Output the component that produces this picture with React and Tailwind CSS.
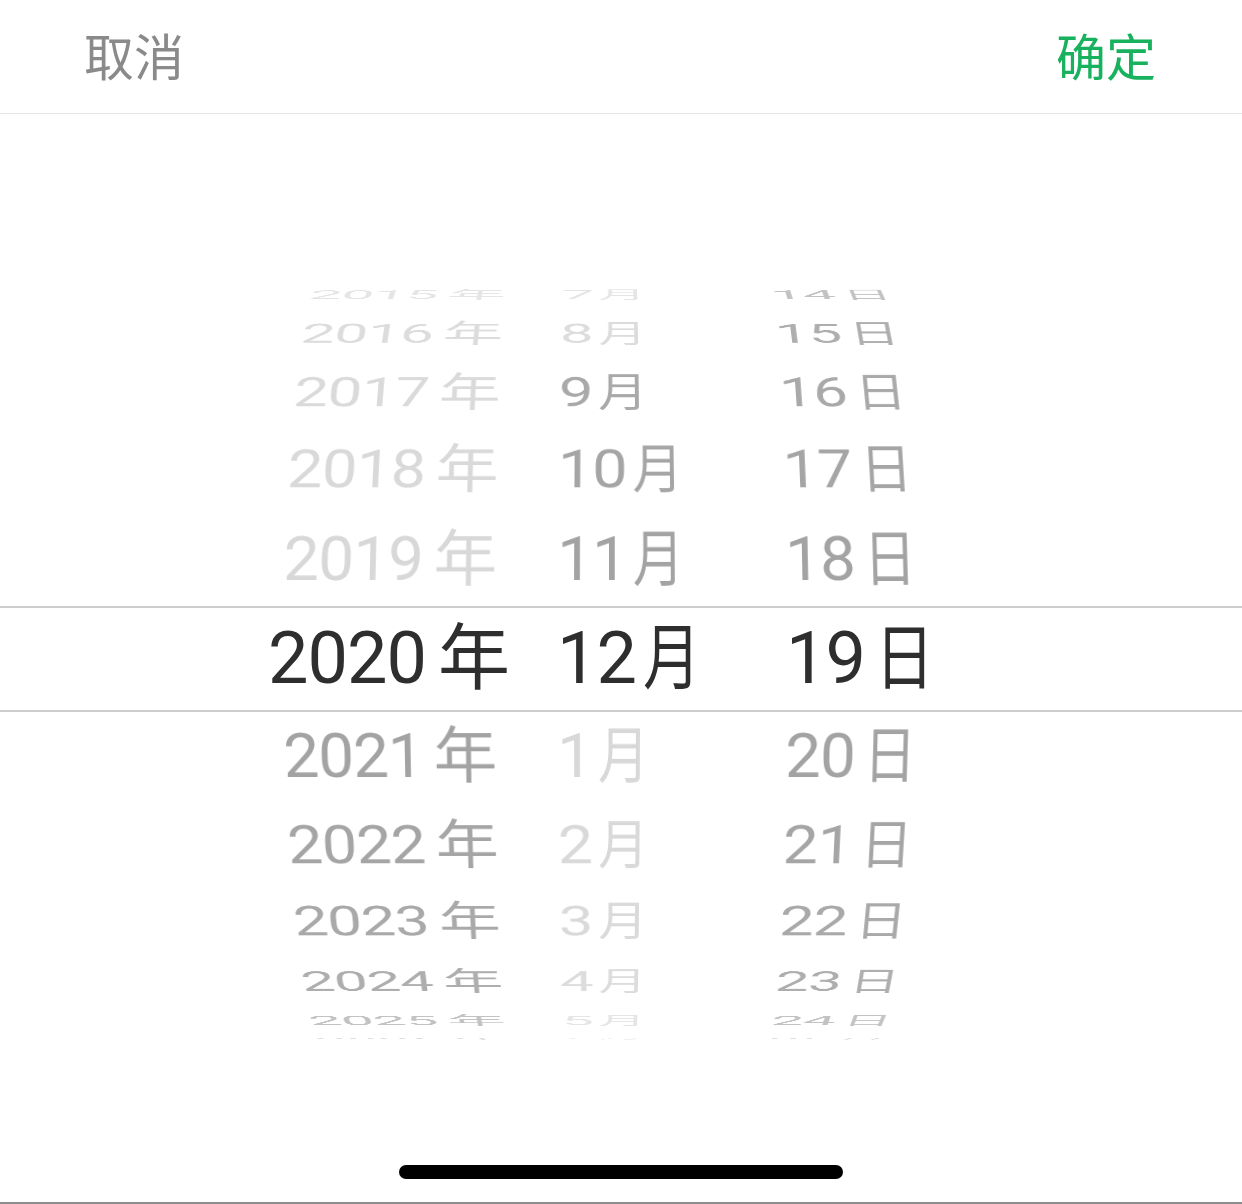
import React from 'react'

// wheel geometry, measured off the reference
const R = 385
const P = 2800
const OFFS = [-381, -364, -325, -266, -189, -99, 0, 98, 187, 263, 323, 362, 380]
const FADE = [1, 1, 0.98, 0.94, 0.88, 0.66, 0.36]

const years = [2014, 2015, 2016, 2017, 2018, 2019, 2020, 2021, 2022, 2023, 2024, 2025, 2026]
const months = [6, 7, 8, 9, 10, 11, 12, 1, 2, 3, 4, 5, 6]
const days = [13, 14, 15, 16, 17, 18, 19, 20, 21, 22, 23, 24, 25]

// which cells are greyed out (light) in the picture
const yearLight = (i) => i < 6
const monthLight = (i) => i < 3 || i > 6
const dayLight = () => false

function rowStyle(i) {
  const off = OFFS[i]
  const sin = off / R
  const theta = (Math.asin(sin) * 180) / Math.PI
  const cos = Math.sqrt(1 - sin * sin)
  const z = -R * (1 - cos)
  const s = P / (P - z)
  const y = off / s
  return {
    transform: `translateY(${y}px) translateZ(${z}px) rotateX(${-theta}deg)`,
    opacity: FADE[Math.abs(i - 6)],
  }
}

function Cell({ i, num, unit, light, unitClass }) {
  const selected = i === 6
  return (
    <div
      style={selected ? undefined : rowStyle(i)}
      className={`[grid-area:1/1] self-center h-[84px] flex items-center leading-none whitespace-nowrap tracking-[-1px] ${
        selected
          ? 'text-[72px] text-[#2e2e2e]'
          : light
          ? 'text-[64px] text-[#d8d8d8]'
          : 'text-[64px] text-[#a3a3a3]'
      }`}
    >
      <span>{num}</span>
      <span className={`inline-block ${unitClass}`}>{unit}</span>
    </div>
  )
}

function Column({ items, unit, isLight, unitClass, className }) {
  return (
    <div className={`grid h-full [transform-style:preserve-3d] ${className}`}>
      {items.map((n, i) => (
        <Cell key={i} i={i} num={n} unit={unit} light={isLight(i)} unitClass={unitClass} />
      ))}
    </div>
  )
}

export default function App() {
  return (
    <div className="w-[1242px] h-[1204px] bg-white overflow-hidden flex flex-col [font-family:Roboto,'Noto_Sans_CJK_SC',sans-serif]">
      {/* header */}
      <div className="h-[114px] shrink-0 border-b border-[#e6e6e6] flex items-center justify-between pl-[84px] pr-[86px] pb-[6px] [font-family:'Noto_Sans_CJK_SC',sans-serif] text-[50px] leading-none">
        <span className="text-[#8a8a8a]">取消</span>
        <span className="text-[#18b15e]">确定</span>
      </div>

      {/* wheel */}
      <div className="mt-[162px] h-[765px] shrink-0 grid overflow-hidden">
        <div className="[grid-area:1/1] self-center w-full h-[106px] border-y-2 border-[#cdcdcd]" />
        <div className="[grid-area:1/1] flex h-full pl-[268px] [perspective:2800px] [perspective-origin:606px_382px]">
          <Column
            items={years}
            unit="年"
            isLight={yearLight}
            unitClass="ml-[0.17em]"
            className="w-[240px] justify-items-center"
          />
          <Column
            items={months}
            unit="月"
            isLight={monthLight}
            unitClass="ml-[0.1em] scale-x-[0.8] origin-left"
            className="ml-[49px] w-[229px] justify-items-start"
          />
          <Column
            items={days}
            unit="日"
            isLight={dayLight}
            unitClass="ml-[0.14em] scale-x-[0.82] origin-left"
            className="w-[240px] justify-items-start"
          />
        </div>
      </div>

      {/* home indicator */}
      <div className="mt-[124px] mx-auto w-[444px] h-[14px] rounded-full bg-black shrink-0" />
      <div className="mt-auto h-[2px] bg-[#8c8c8c] shrink-0" />
    </div>
  )
}
